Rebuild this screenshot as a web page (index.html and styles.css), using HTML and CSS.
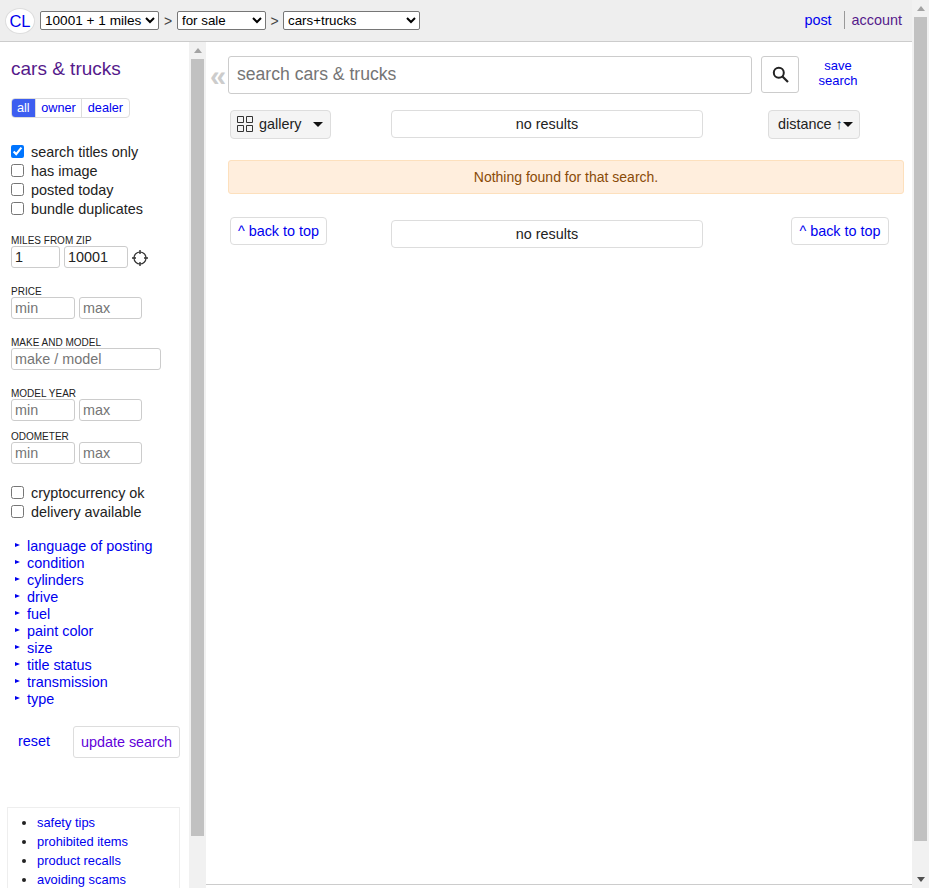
FILE: index.html
```html
<!DOCTYPE html>
<html>
    <head>
        <meta charset="utf-8">
        <title>cars & trucks</title>
        <link rel="stylesheet" href="styles.css">
    </head>
    <body>
        <div class="page">
            <div class="content">
                <div class="topbar">
                    <a class="logo" href="#">CL</a>
                    <select class="sel sel-area"><option>10001 + 1 miles</option></select>
                    <span class="gt">&gt;</span>
                    <select class="sel sel-cat"><option>for sale</option></select>
                    <span class="gt gt-last">&gt;</span>
                    <select class="sel sel-sub"><option>cars+trucks</option></select>
                    <div class="toplinks">
                        <a class="post" href="#">post</a>
                        <a class="account" href="#">account</a>
                    </div>
                </div>
                <div class="columns">
                    <div class="side">
                        <div class="side-inner">
                            <h1 class="title">cars &amp; trucks</h1>
                            <div class="seg">
                                <a class="seg-item on" href="#">all</a>
                                <a class="seg-item" href="#">owner</a>
                                <a class="seg-item" href="#">dealer</a>
                            </div>
                            <div class="checks first">
                                <label class="check"><input type="checkbox" checked>search titles only</label>
                                <label class="check"><input type="checkbox">has image</label>
                                <label class="check"><input type="checkbox">posted today</label>
                                <label class="check"><input type="checkbox">bundle duplicates</label>
                            </div>
                            <div class="lbl l-miles">MILES FROM ZIP</div>
                            <div class="pair">
                                <input class="txt w-miles" value="1">
                                <input class="txt w-zip" value="10001">
                                <svg class="cross" width="16" height="16" viewBox="0 0 16 16">
                                    <circle cx="8" cy="8" r="6" fill="none" stroke="#333" stroke-width="1.2"/>
                                    <path d="M8 0v4M8 12v4M0 8h4M12 8h4" stroke="#333" stroke-width="1.4"/>
                                </svg>
                            </div>
                            <div class="lbl">PRICE</div>
                            <div class="pair">
                                <input class="txt w-min" placeholder="min">
                                <input class="txt w-max" placeholder="max">
                            </div>
                            <div class="lbl">MAKE AND MODEL</div>
                            <div class="pair">
                                <input class="txt w-make" placeholder="make / model">
                            </div>
                            <div class="lbl">MODEL YEAR</div>
                            <div class="pair">
                                <input class="txt w-min" placeholder="min">
                                <input class="txt w-max" placeholder="max">
                            </div>
                            <div class="lbl l-odo">ODOMETER</div>
                            <div class="pair">
                                <input class="txt w-min" placeholder="min">
                                <input class="txt w-max" placeholder="max">
                            </div>
                            <div class="checks second">
                                <label class="check"><input type="checkbox">cryptocurrency ok</label>
                                <label class="check"><input type="checkbox">delivery available</label>
                            </div>
                            <div class="more">
                                <a class="more-item" href="#">language of posting</a>
                                <a class="more-item" href="#">condition</a>
                                <a class="more-item" href="#">cylinders</a>
                                <a class="more-item" href="#">drive</a>
                                <a class="more-item" href="#">fuel</a>
                                <a class="more-item" href="#">paint color</a>
                                <a class="more-item" href="#">size</a>
                                <a class="more-item" href="#">title status</a>
                                <a class="more-item" href="#">transmission</a>
                                <a class="more-item" href="#">type</a>
                            </div>
                            <div class="actions">
                                <a class="reset" href="#">reset</a>
                                <a class="update" href="#">update search</a>
                            </div>
                            <ul class="safety">
                                <li><a href="#">safety tips</a></li>
                                <li><a href="#">prohibited items</a></li>
                                <li><a href="#">product recalls</a></li>
                                <li><a href="#">avoiding scams</a></li>
                            </ul>
                        </div>
                    </div>
                    <div class="bar bar-side">
                        <div class="arrow up"></div>
                        <div class="thumb"></div>
                        <div class="rest"></div>
                    </div>
                    <div class="main">
                        <div class="search-row">
                            <span class="collapse">«</span>
                            <input class="search-box" placeholder="search cars &amp; trucks">
                            <button class="search-btn">
                                <svg width="17" height="17" viewBox="0 0 17 17">
                                    <circle cx="6.8" cy="6.8" r="5" fill="none" stroke="#222" stroke-width="2"/>
                                    <path d="M10.5 10.5L16 16" stroke="#222" stroke-width="2.2"/>
                                </svg>
                            </button>
                            <a class="save" href="#">save<br>search</a>
                        </div>
                        <div class="view-row">
                            <div class="drop gallery">
                                <svg width="16" height="16" viewBox="0 0 16 16">
                                    <path d="M.5.5h6v6h-6zM9.5.5h6v6h-6zM.5 9.5h6v6h-6zM9.5 9.5h6v6h-6z" fill="none" stroke="#333"/>
                                </svg>
                                <span class="drop-text">gallery</span>
                                <span class="caret"></span>
                            </div>
                            <div class="count count-top">no results</div>
                            <div class="drop distance">
                                <span>distance ↑</span>
                                <span class="caret"></span>
                            </div>
                        </div>
                        <div class="alert">Nothing found for that search.</div>
                        <div class="bottom-row">
                            <a class="totop first-top" href="#">^ back to top</a>
                            <div class="count count-bottom">no results</div>
                            <a class="totop last-top" href="#">^ back to top</a>
                        </div>
                        <div class="fill"></div>
                        <div class="endline"></div>
                    </div>
                </div>
            </div>
            <div class="bar bar-page">
                <div class="arrow up"></div>
                <div class="thumb"></div>
                <div class="rest"></div>
                <div class="arrow down"></div>
            </div>
        </div>
    </body>
</html>
```

FILE: styles.css
```css
html, body
{
    margin: 0;
    height: 100%;
    overflow: hidden;
}

body
{
    font-family: "Liberation Sans", Arial, sans-serif;
    font-size: 14.4px;
    color: #222;
    background-color: #fff;
}

a
{
    color: #00e;
    text-decoration: none;
}

.page
{
    display: flex;
    height: 888px;
}

.content
{
    width: 912px;
    display: flex;
    flex-direction: column;
}

/* top bar */
.topbar
{
    height: 41px;
    flex: none;
    display: flex;
    align-items: center;
    background-color: #eee;
    border-bottom: 1px solid #ccc;
    padding-left: 5px;
}

.logo
{
    width: 28px;
    height: 24px;
    border: 1px solid #ddd;
    border-radius: 50%;
    background-color: #fff;
    font-size: 16.5px;
    line-height: 24px;
    text-align: center;
}

.sel
{
    height: 19px;
    padding: 0;
    font-family: inherit;
    font-size: 13.33px;
    color: #000;
    background-color: #fff;
    border: 1px solid #767676;
    border-radius: 2px;
}

.sel-area
{
    width: 119px;
    margin-left: 5px;
    font-size: 13.6px;
}

.sel-cat
{
    width: 89px;
}

.sel-sub
{
    width: 137px;
}

.gt
{
    width: 18px;
    font-size: 14px;
    text-align: center;
    color: #444;
}

.gt-last
{
    width: 17px;
}

.toplinks
{
    margin-left: auto;
    display: flex;
    align-items: center;
    padding: 0 10px 2px 0;
}

.post
{
    padding-right: 12px;
}

.account
{
    color: #551a8b;
    border-left: 1px solid #999;
    padding: 1px 0 1px 7px;
}

.columns
{
    flex: 1;
    display: flex;
    min-height: 0;
}

/* scrollbars */
.bar
{
    width: 17px;
    flex: none;
    display: flex;
    flex-direction: column;
    align-items: center;
    background-color: #f1f1f1;
}

.arrow
{
    width: 0;
    height: 0;
    flex: none;
    border-left: 4px solid transparent;
    border-right: 4px solid transparent;
}

.arrow.up
{
    margin: 6px 0 6px;
    border-bottom: 5px solid #a3a3a3;
}

.arrow.down
{
    margin: 6px 0 6px;
    border-top: 5px solid #505050;
}

.thumb
{
    width: 13px;
    flex: none;
    background-color: #c1c1c1;
}

.rest
{
    flex: 1;
}

.bar-side .thumb
{
    height: 777px;
}

.bar-page .thumb
{
    height: 824px;
}

/* left column */
.side
{
    width: 189px;
    flex: none;
    overflow: hidden;
}

.side-inner
{
    padding-left: 11px;
}

.title
{
    margin: 16px 0 0;
    font-size: 19px;
    font-weight: normal;
    line-height: 22px;
    color: #551a8b;
}

.seg
{
    display: inline-flex;
    height: 18px;
    margin-top: 18px;
    border: 1px solid #ddd;
    border-radius: 4px;
    vertical-align: top;
    font-size: 12.7px;
    line-height: 18px;
    overflow: hidden;
}

.seg-item
{
    padding: 0 5.5px;
    border-left: 1px solid #ddd;
}

.seg-item.on
{
    padding: 0 5px;
    background-color: #3d5ef0;
    color: #fff;
    border-left: 0;
}

.checks.first
{
    margin-top: 24px;
}

.checks.second
{
    margin-top: 19px;
}

.check
{
    display: flex;
    align-items: center;
    height: 19px;
}

.check input
{
    width: 13px;
    height: 13px;
    margin: 0 7px 1px 0;
}

.lbl
{
    margin-top: 19px;
    font-size: 10px;
    line-height: 10px;
}

.lbl.l-miles
{
    margin-top: 18px;
}

.lbl.l-odo
{
    margin-top: 11px;
}

.pair
{
    display: flex;
    align-items: center;
    gap: 4px;
}

.txt
{
    height: 22px;
    box-sizing: border-box;
    padding: 0 3px;
    font-family: inherit;
    font-size: 14.4px;
    color: #222;
    background-color: #fff;
    border: 1px solid #ccc;
    border-radius: 3px;
}

.txt::placeholder,
.search-box::placeholder
{
    color: #757575;
    opacity: 1;
}

.w-miles
{
    width: 49px;
}

.w-zip
{
    width: 64px;
}

.w-min
{
    width: 64px;
}

.w-max
{
    width: 63px;
}

.w-make
{
    width: 150px;
}

.cross
{
    flex: none;
    margin-top: 2px;
}

.more
{
    margin-top: 16px;
}

.more-item
{
    display: flex;
    align-items: center;
    height: 17px;
    padding-left: 16px;
    position: relative;
}

.more-item::before
{
    content: "";
    position: absolute;
    left: 4px;
    top: 6px;
    border-left: 5px solid #00e;
    border-top: 2.5px solid transparent;
    border-bottom: 2.5px solid transparent;
}

.actions
{
    display: flex;
    align-items: center;
    margin-top: 19px;
}

.reset
{
    width: 62px;
    box-sizing: border-box;
    padding: 0 0 2px 7px;
}

.update
{
    width: 107px;
    height: 32px;
    box-sizing: border-box;
    border: 1px solid #ddd;
    border-radius: 3px;
    color: #6200d9;
    line-height: 30px;
    text-align: center;
}

.safety
{
    width: 173px;
    height: 90px;
    box-sizing: border-box;
    margin: 49px 0 0 -4px;
    padding: 5px 0 0 29px;
    border: 1px solid #eee;
    list-style: disc;
    font-size: 12.9px;
}

.safety li
{
    height: 19px;
    line-height: 19px;
}

/* results side */
.main
{
    flex: 1;
    min-width: 0;
    display: flex;
    flex-direction: column;
}

.search-row
{
    display: flex;
    align-items: flex-start;
    margin-top: 14px;
    padding-left: 4px;
}

.collapse
{
    width: 18px;
    height: 38px;
    font-size: 29px;
    font-weight: bold;
    line-height: 40px;
    color: #ccc;
}

.search-box
{
    width: 524px;
    height: 38px;
    box-sizing: border-box;
    padding: 0 8px 2px;
    font-family: inherit;
    font-size: 17.6px;
    background-color: #fff;
    border: 1px solid #ccc;
    border-radius: 3px;
}

.search-btn
{
    display: flex;
    align-items: center;
    justify-content: center;
    width: 38px;
    height: 37px;
    margin-left: 9px;
    padding: 0;
    background-color: #fff;
    border: 1px solid #ccc;
    border-radius: 3px;
}

.save
{
    width: 52px;
    margin: 2px 0 0 13px;
    font-size: 13px;
    line-height: 15px;
    text-align: center;
}

.view-row
{
    display: flex;
    align-items: flex-start;
    margin-top: 16px;
}

.drop
{
    display: flex;
    align-items: center;
    height: 29px;
    box-sizing: border-box;
    padding-bottom: 1px;
    background-color: #f4f4f4;
    border: 1px solid #ddd;
    border-radius: 4px;
}

.caret
{
    width: 0;
    height: 0;
    border-left: 5px solid transparent;
    border-right: 5px solid transparent;
    border-top: 5px solid #111;
}

.gallery
{
    width: 101px;
    margin-left: 24px;
    padding-left: 6px;
}

.drop-text
{
    margin-left: 6px;
    width: 54px;
}

.distance
{
    width: 92px;
    margin-left: 65px;
    padding-left: 9px;
}

.count
{
    width: 312px;
    height: 28px;
    box-sizing: border-box;
    margin-left: 60px;
    border: 1px solid #ddd;
    border-radius: 4px;
    line-height: 27px;
    text-align: center;
}

.alert
{
    width: 676px;
    height: 34px;
    box-sizing: border-box;
    margin: 21px 0 0 22px;
    background-color: #ffeedd;
    border: 1px solid #fde0bd;
    border-radius: 3px;
    color: #8a4b08;
    font-size: 14px;
    line-height: 32px;
    text-align: center;
}

.bottom-row
{
    display: flex;
    align-items: flex-start;
    margin-top: 23px;
}

.totop
{
    height: 28px;
    box-sizing: border-box;
    border: 1px solid #ddd;
    border-radius: 4px;
    line-height: 26px;
    text-align: center;
}

.first-top
{
    width: 97px;
    margin-left: 24px;
}

.count-bottom
{
    margin: 3px 0 0 64px;
}

.last-top
{
    width: 98px;
    margin-left: 88px;
}

.fill
{
    flex: 1;
}

.endline
{
    height: 1px;
    flex: none;
    margin-bottom: 3px;
    background-color: #ccc;
}
```
